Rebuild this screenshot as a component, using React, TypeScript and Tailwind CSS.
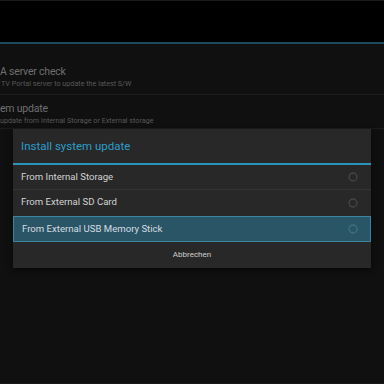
import React from 'react'

const options = [
  { label: 'From Internal Storage', active: false },
  { label: 'From External SD Card', active: false },
  { label: 'From External USB Memory Stick', active: true },
]

function Radio({ active }: { active: boolean }) {
  return (
    <svg width="10" height="10" viewBox="0 0 10 10">
      <circle cx="5" cy="5" r="4" fill="none" stroke={active ? '#3f6f80' : '#454545'} strokeWidth="1.3" />
    </svg>
  )
}

export default function App() {
  return (
    <div
      className="relative w-[384px] h-[384px] overflow-hidden bg-[#101010]"
      style={{ fontFamily: 'Roboto, "Noto Sans", sans-serif' }}
    >
      {/* action bar */}
      <div className="h-[42px] bg-black border-t border-[#1a1a1a]" />
      <div className="h-[2px] bg-[#1e4b5c]" />

      {/* settings list (dimmed behind dialog) */}
      <div className="pt-[21px]">
        <div className="h-[30px] flex flex-col border-b border-[#1c1c1c]">
          <span className="text-[10.5px] leading-[14px] tracking-[-0.2px] text-[#6f6f6f]">A server check</span>
          <span className="text-[7.2px] leading-[10px] text-[#585858] pl-px">TV Portal server to update the latest S/W</span>
        </div>
        <div className="h-[34px] flex flex-col pt-[7px] border-b border-[#1c1c1c]">
          <span className="text-[10.5px] leading-[14px] tracking-[-0.2px] text-[#6f6f6f]">em update</span>
          <span className="text-[7.2px] leading-[10px] text-[#585858]">update from Internal Storage or External storage</span>
        </div>
      </div>
      <div className="absolute bottom-0 left-0 right-0 h-px bg-[#1a1a1a]" />

      {/* dialog */}
      <div className="absolute left-[13px] top-[129px] w-[358px] bg-[#282828] shadow-[0_2px_6px_rgba(0,0,0,0.6)]">
        <div className="h-[34px] flex items-center pl-[8px] pt-px text-[11.5px] text-[#2c9dc8]">Install system update</div>
        <div className="h-[2px] bg-[#2a93bb]" />
        {options.map((o, i) => (
          <div
            key={o.label}
            className={
              o.active
                ? 'h-[26px] mt-px flex items-center justify-between pl-[8px] pr-[12px] bg-[#2a5566] border border-[#3a869f] text-[9.6px] text-[#d4dde0]'
                : `flex items-center justify-between pl-[8px] pr-[13px] text-[9.6px] text-[#d2d2d2] ${i === 0 ? 'h-[25px] border-b border-[#333333]' : 'h-[25px]'}`
            }
          >
            <span>{o.label}</span>
            <Radio active={o.active} />
          </div>
        ))}
        <div className="h-[26px] flex items-center justify-center text-[8px] text-[#cfcfcf]">Abbrechen</div>
      </div>
    </div>
  )
}
